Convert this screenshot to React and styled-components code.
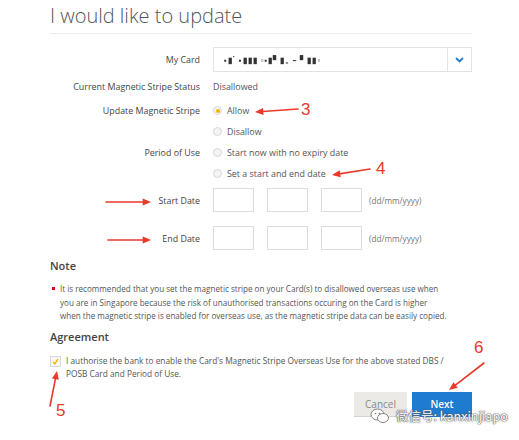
import React from 'react'
import styled, { createGlobalStyle } from 'styled-components'

const Global = createGlobalStyle`
  html, body {
    margin: 0;
    background: #fff;
  }
  body {
    font-family: "Open Sans", "Noto Sans", sans-serif;
    color: #444;
  }
`

const Page = styled.div`
  position: relative;
  width: 519px;
  height: 440px;
  overflow: hidden;
  padding: 0 47px 0 50px;
  box-sizing: border-box;
`

const Title = styled.h1`
  margin: 0;
  padding-top: 1px;
  font-size: 20px;
  font-weight: 300;
  line-height: 30px;
  color: #555;
  border-bottom: 1px solid #ececec;
  padding-bottom: 2px;
`

const Form = styled.div`
  display: flex;
  flex-direction: column;
  margin-top: 13px;
`

const Row = styled.div`
  display: grid;
  grid-template-columns: 150px 1fr;
  column-gap: 13px;
  align-items: ${p => (p.$top ? 'start' : 'center')};
  margin-bottom: ${p => p.$gap || 0}px;
`

const Label = styled.div`
  text-align: right;
  font-size: 8.9px;
  color: #444;
  line-height: 13px;
`

const Value = styled.div`
  font-size: 8.9px;
  color: #555;
  line-height: 13px;
`

const Select = styled.div`
  display: flex;
  height: 25px;
  border: 1px solid #e3e3e3;
  box-sizing: border-box;
  align-items: stretch;
`

const Masked = styled.div`
  flex: 1;
  display: flex;
  align-items: center;
  padding-left: 10px;
  font-size: 8px;
  font-weight: 700;
  color: #333;
  letter-spacing: 1px;
  filter: blur(0.7px);
`

const Caret = styled.div`
  width: 23px;
  border-left: 1px solid #e3e3e3;
  display: flex;
  align-items: center;
  justify-content: center;
`

const Options = styled.div`
  display: flex;
  flex-direction: column;
  gap: 8px;
`

const Option = styled.label`
  display: flex;
  align-items: center;
  gap: 5px;
  font-size: 8.9px;
  color: #555;
  line-height: 13px;
`

const Radio = styled.span`
  width: 9px;
  height: 9px;
  border-radius: 50%;
  border: 1px solid #d8d8d8;
  background: #f4f4f4;
  box-sizing: border-box;
  display: flex;
  align-items: center;
  justify-content: center;
  &::after {
    content: '';
    width: 4px;
    height: 4px;
    border-radius: 50%;
    background: ${p => (p.$on ? '#f5b400' : 'transparent')};
  }
`

const DateFields = styled.div`
  display: flex;
  align-items: center;
`

const DateBox = styled.div`
  width: 41px;
  height: 24px;
  border: 1px solid #dcdcdc;
  box-sizing: border-box;
  margin-right: ${p => p.$mr}px;
`

const Hint = styled.span`
  font-size: 8.2px;
  color: #777;
`

const Heading = styled.h2`
  margin: ${p => p.$mt || 0}px 0 0;
  font-size: 11px;
  font-weight: 600;
  color: #444;
  line-height: 16px;
`

const NoteList = styled.ul`
  margin: 8px 0 0;
  padding: 0 0 0 10px;
  list-style: none;
`

const NoteItem = styled.li`
  position: relative;
  font-size: 8.1px;
  line-height: 13.5px;
  color: #555;
  white-space: nowrap;
  &::before {
    content: '';
    position: absolute;
    left: -8px;
    top: 5px;
    width: 3px;
    height: 3px;
    background: #d9001b;
  }
`

const Agreement = styled.div`
  display: flex;
  align-items: flex-start;
  gap: 5px;
  margin-top: 9px;
`

const Check = styled.span`
  flex: none;
  width: 9px;
  height: 9px;
  margin-top: 2px;
  border: 1px solid #d8d8d8;
  background: #f8f8f8;
  display: flex;
  align-items: center;
  justify-content: center;
`

const AgreeText = styled.div`
  font-size: 8.3px;
  line-height: 13px;
  color: #555;
  white-space: nowrap;
`

const Buttons = styled.div`
  display: flex;
  justify-content: flex-end;
  gap: 5px;
  margin-top: 12px;
`

const Button = styled.button`
  height: 25px;
  padding: 0;
  width: ${p => p.$w}px;
  border: none;
  font-family: inherit;
  font-size: 10px;
  font-weight: ${p => (p.$primary ? 600 : 400)};
  background: ${p => (p.$primary ? '#1f7bcf' : '#eceae7')};
  color: ${p => (p.$primary ? '#fff' : '#888')};
  box-shadow: ${p => (p.$primary ? 'none' : 'inset 0 -1px 0 #d5d3d0')};
`

const Mark = styled.span`
  position: absolute;
  left: ${p => p.$x}px;
  top: ${p => p.$y}px;
  font-family: "Liberation Sans", sans-serif;
  font-size: 17px;
  color: #e8392b;
  line-height: 1;
`

const Arrow = styled.svg`
  position: absolute;
  left: 0;
  top: 0;
  pointer-events: none;
`

const Watermark = styled.div`
  position: absolute;
  left: 370px;
  top: 406px;
  display: flex;
  align-items: center;
  gap: 6px;
  font-family: "Noto Sans CJK SC", "Noto Sans", sans-serif;
  font-size: 12.5px;
  color: #fff;
  text-shadow: 0 0 1px #555, 0 0 1px #555, 0 0 2px #666;
`

function ArrowLine({ x1, y1, x2, y2 }) {
  const a = Math.atan2(y2 - y1, x2 - x1)
  const l = 9
  const w = 0.4
  const p1 = [x2 - l * Math.cos(a - w), y2 - l * Math.sin(a - w)]
  const p2 = [x2 - l * Math.cos(a + w), y2 - l * Math.sin(a + w)]
  return (
    <g>
      <line x1={x1} y1={y1} x2={x2 - 4 * Math.cos(a)} y2={y2 - 4 * Math.sin(a)} stroke="#e8392b" strokeWidth="1.6" strokeLinecap="round" />
      <polygon points={`${x2},${y2} ${p1[0]},${p1[1]} ${p2[0]},${p2[1]}`} fill="#e8392b" />
    </g>
  )
}

export default function App() {
  return (
    <Page>
      <Global />
      <Title>I would like to update</Title>
      <Form>
        <Row $gap={8}>
          <Label>My Card</Label>
          <Select>
            <Masked>▪▮˙ ▪▮▮▮ ▫▪▮▘▮₌ – ▘▮▮▫</Masked>
            <Caret>
              <svg width="9" height="6" viewBox="0 0 9 6">
                <path d="M1 1l3.5 3.5L8 1" fill="none" stroke="#1f7bcf" strokeWidth="1.8" />
              </svg>
            </Caret>
          </Select>
        </Row>
        <Row $gap={11}>
          <Label>Current Magnetic Stripe Status</Label>
          <Value>Disallowed</Value>
        </Row>
        <Row $top $gap={8}>
          <Label>Update Magnetic Stripe</Label>
          <Options>
            <Option><Radio $on />Allow</Option>
            <Option><Radio />Disallow</Option>
          </Options>
        </Row>
        <Row $top $gap={8}>
          <Label>Period of Use</Label>
          <Options>
            <Option><Radio />Start now with no expiry date</Option>
            <Option><Radio />Set a start and end date</Option>
          </Options>
        </Row>
        <Row $gap={14}>
          <Label>Start Date</Label>
          <DateFields>
            <DateBox $mr={13} />
            <DateBox $mr={13} />
            <DateBox $mr={7} />
            <Hint>(dd/mm/yyyy)</Hint>
          </DateFields>
        </Row>
        <Row $gap={8}>
          <Label>End Date</Label>
          <DateFields>
            <DateBox $mr={13} />
            <DateBox $mr={13} />
            <DateBox $mr={7} />
            <Hint>(dd/mm/yyyy)</Hint>
          </DateFields>
        </Row>
      </Form>

      <Heading>Note</Heading>
      <NoteList>
        <NoteItem>
          It is recommended that you set the magnetic stripe on your Card(s) to disallowed overseas use when<br />
          you are in Singapore because the risk of unauthorised transactions occuring on the Card is higher<br />
          when the magnetic stripe is enabled for overseas use, as the magnetic stripe data can be easily copied.
        </NoteItem>
      </NoteList>

      <Heading $mt={6}>Agreement</Heading>
      <Agreement>
        <Check>
          <svg width="7" height="7" viewBox="0 0 7 7">
            <path d="M1 4l1.8 1.8L6 1" fill="none" stroke="#f5b400" strokeWidth="1.4" />
          </svg>
        </Check>
        <AgreeText>
          I authorise the bank to enable the Card's Magnetic Stripe Overseas Use for the above stated DBS /<br />
          POSB Card and Period of Use.
        </AgreeText>
      </Agreement>

      <Buttons>
        <Button $w={53}>Cancel</Button>
        <Button $w={60} $primary>Next</Button>
      </Buttons>

      <Arrow width="519" height="440" viewBox="0 0 519 440">
        <ArrowLine x1={298} y1={109} x2={255} y2={112} />
        <ArrowLine x1={370} y1={169} x2={332} y2={175} />
        <ArrowLine x1={106} y1={202} x2={151} y2={202} />
        <ArrowLine x1={108} y1={240} x2={151} y2={240} />
        <ArrowLine x1={50} y1={406} x2={57} y2={371} />
        <ArrowLine x1={484} y1={363} x2={449} y2={390} />
      </Arrow>
      <Mark $x={301} $y={101}>3</Mark>
      <Mark $x={376} $y={160}>4</Mark>
      <Mark $x={56} $y={402}>5</Mark>
      <Mark $x={474} $y={339}>6</Mark>

      <Watermark>
        <svg width="20" height="16" viewBox="0 0 20 16">
          <ellipse cx="7.5" cy="6.5" rx="6.5" ry="5.5" fill="#fff" stroke="#777" strokeWidth="0.9" />
          <ellipse cx="13" cy="10" rx="5.5" ry="4.5" fill="#fff" stroke="#777" strokeWidth="0.9" />
          <circle cx="5.5" cy="5.5" r="0.8" fill="#777" />
          <circle cx="9.5" cy="5.5" r="0.8" fill="#777" />
        </svg>
        <span>微信号: kanxinjiapo</span>
      </Watermark>
    </Page>
  )
}
